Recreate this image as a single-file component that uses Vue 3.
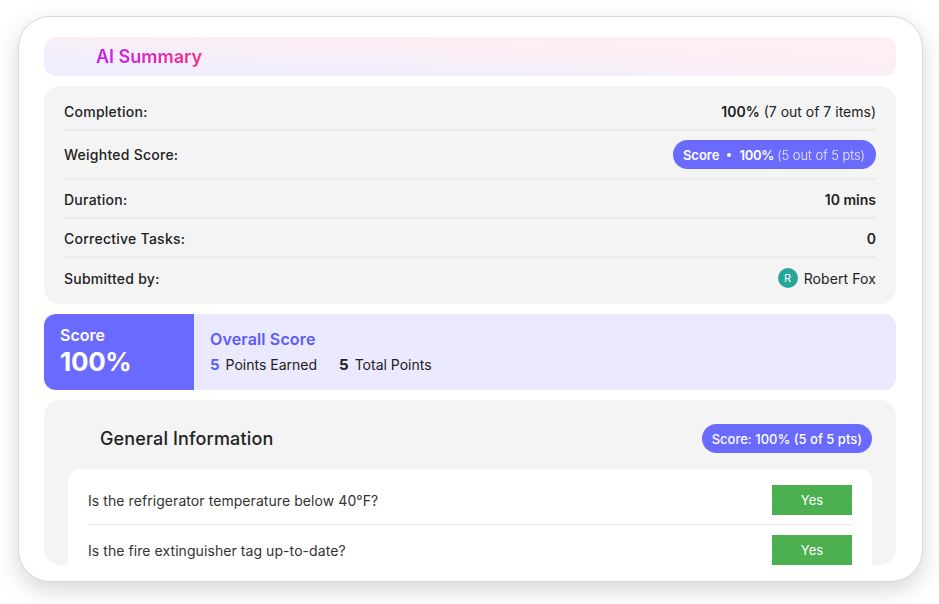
<template>
  <div class="page">
    <div class="card">
      <div class="ai-header"><span class="ai-title">AI Summary</span></div>

      <div class="details">
        <div class="row row-first">
          <span class="label">Completion:</span>
          <span class="value"><b>100%</b> (7 out of 7 items)</span>
        </div>
        <div class="row row-score">
          <span class="label">Weighted Score:</span>
          <span class="pill">
            <b>Score</b><i class="dot"></i><b class="pct">100%</b>
            <span class="pill-light">(5 out of 5 pts)</span>
          </span>
        </div>
        <div class="row row-plain">
          <span class="label">Duration:</span>
          <span class="value"><b>10 mins</b></span>
        </div>
        <div class="row row-plain">
          <span class="label">Corrective Tasks:</span>
          <span class="value"><b>0</b></span>
        </div>
        <div class="row row-last">
          <span class="label">Submitted by:</span>
          <span class="user">
            <span class="avatar">R</span>
            Robert Fox
          </span>
        </div>
      </div>

      <div class="score-band">
        <div class="score-box">
          <div class="score-label">Score</div>
          <div class="score-num">100%</div>
        </div>
        <div class="score-info">
          <div class="overall">Overall Score</div>
          <div class="points">
            <span class="point"><b class="blue">5</b>Points Earned</span>
            <span class="point"><b>5</b>Total Points</span>
          </div>
        </div>
      </div>

      <div class="general">
        <div class="general-head">
          <h2>General Information</h2>
          <span class="score-pill">Score: 100% (5 of 5 pts)</span>
        </div>
        <div class="questions">
          <div v-for="q in questions" :key="q" class="question">
            <span>{{ q }}</span>
            <span class="yes">Yes</span>
          </div>
        </div>
      </div>
    </div>
  </div>
</template>

<script setup>
const questions = [
  "Is the refrigerator temperature below 40°F?",
  "Is the fire extinguisher tag up-to-date?",
];
</script>

<style>
html,
body {
  margin: 0;
  background: #fff;
}
</style>

<style scoped>
.page {
  box-sizing: border-box;
  width: 939px;
  height: 604px;
  padding: 16px 16px 22px 18px;
  overflow: hidden;
  font-family: "Inter", "Noto Sans", sans-serif;
  color: #222;
  background: #fff;
}

.card {
  box-sizing: border-box;
  height: 566px;
  padding: 20px 26px 16px 25px;
  display: flex;
  flex-direction: column;
  gap: 10px;
  background: #fff;
  border: 1px solid #d9d9d9;
  border-radius: 32px;
  box-shadow: 0 8px 24px rgba(0, 0, 0, 0.16);
}

.ai-header {
  flex: none;
  height: 39px;
  padding-left: 52px;
  display: flex;
  align-items: center;
  border-radius: 12px;
  background: linear-gradient(to top right, #efeefe 12%, #f8eef8 45%, #ffeef2 75%);
}

.ai-title {
  font-size: 18px;
  font-weight: 600;
  background: linear-gradient(90deg, #c41ff5, #fb2a85);
  -webkit-background-clip: text;
  background-clip: text;
  color: transparent;
}

.details {
  flex: none;
  height: 218px;
  box-sizing: border-box;
  padding: 6px 20px 0;
  background: #f4f4f4;
  border-radius: 16px;
}

.row {
  height: 39px;
  display: flex;
  align-items: center;
  justify-content: space-between;
  border-bottom: 2px solid #ebebeb;
  box-sizing: border-box;
  font-size: 14px;
}

.row-first,
.row-plain {
  padding-top: 2px;
}

.row-score {
  height: 49px;
}

.row-last {
  border-bottom: none;
  height: 40px;
}

.label {
  font-weight: 500;
  letter-spacing: 0.25px;
}

.value b {
  font-weight: 600;
}

.pill {
  height: 29px;
  padding: 0 11px 0 10px;
  display: flex;
  align-items: center;
  gap: 4px;
  border-radius: 15px;
  background: #6a6aff;
  color: #fff;
  font-size: 13px;
  white-space: pre;
}

.pill b {
  font-weight: 600;
}

.pill .pct {
  letter-spacing: -0.25px;
}

.pill-light {
  margin-left: -1px;
  font-weight: 300;
  letter-spacing: -0.06px;
  opacity: 0.85;
}

.dot {
  width: 4px;
  height: 4px;
  margin: 0 4px;
  border-radius: 50%;
  background: #fff;
}

.user {
  display: flex;
  align-items: center;
  gap: 6px;
  letter-spacing: 0.1px;
}

.avatar {
  width: 20px;
  height: 20px;
  display: flex;
  align-items: center;
  justify-content: center;
  border-radius: 50%;
  background: #26a69a;
  color: #fff;
  font-size: 11px;
}

.score-band {
  flex: none;
  height: 76px;
  display: flex;
  border-radius: 12px;
  overflow: hidden;
  background: #ebe9fe;
}

.score-box {
  width: 150px;
  box-sizing: border-box;
  padding: 12px 16px;
  background: #6a6aff;
  color: #fff;
}

.score-label {
  font-size: 16px;
  font-weight: 600;
  line-height: 19px;
}

.score-num {
  font-size: 26px;
  font-weight: 700;
  letter-spacing: -0.3px;
  line-height: 34px;
}

.score-info {
  padding: 15px 16px;
}

.overall {
  font-size: 16px;
  font-weight: 600;
  letter-spacing: 0.15px;
  line-height: 20px;
  color: #5b5bf6;
}

.points {
  margin-top: 7px;
  display: flex;
  gap: 22px;
  font-size: 14px;
  line-height: 18px;
}

.point b {
  margin-right: 6px;
  font-size: 15px;
  font-weight: 700;
}

.blue {
  color: #5b5bf6;
}

.general {
  flex: 1;
  min-height: 0;
  overflow: hidden;
  box-sizing: border-box;
  padding: 24px 24px 0;
  background: #f4f4f4;
  border-radius: 16px;
}

.general-head {
  height: 29px;
  margin-bottom: 16px;
  padding-left: 32px;
  display: flex;
  align-items: center;
  justify-content: space-between;
}

.general-head h2 {
  margin: 0;
  font-size: 18px;
  font-weight: 500;
  letter-spacing: 0.15px;
}

.score-pill {
  height: 29px;
  padding: 0 10px;
  display: flex;
  align-items: center;
  border-radius: 15px;
  background: #6a6aff;
  color: #fff;
  font-size: 13px;
  font-weight: 500;
}

.questions {
  padding: 16px 20px 0;
  background: #fff;
  border-radius: 12px 12px 0 0;
}

.question {
  display: flex;
  align-items: center;
  justify-content: space-between;
  padding-bottom: 9px;
  margin-bottom: 10px;
  border-bottom: 1px solid #e8e8e8;
  font-size: 14px;
  letter-spacing: 0.07px;
  color: #333;
}

.yes {
  width: 80px;
  height: 30px;
  display: flex;
  align-items: center;
  justify-content: center;
  background: #4caf50;
  color: #fff;
  font-size: 13px;
}
</style>
